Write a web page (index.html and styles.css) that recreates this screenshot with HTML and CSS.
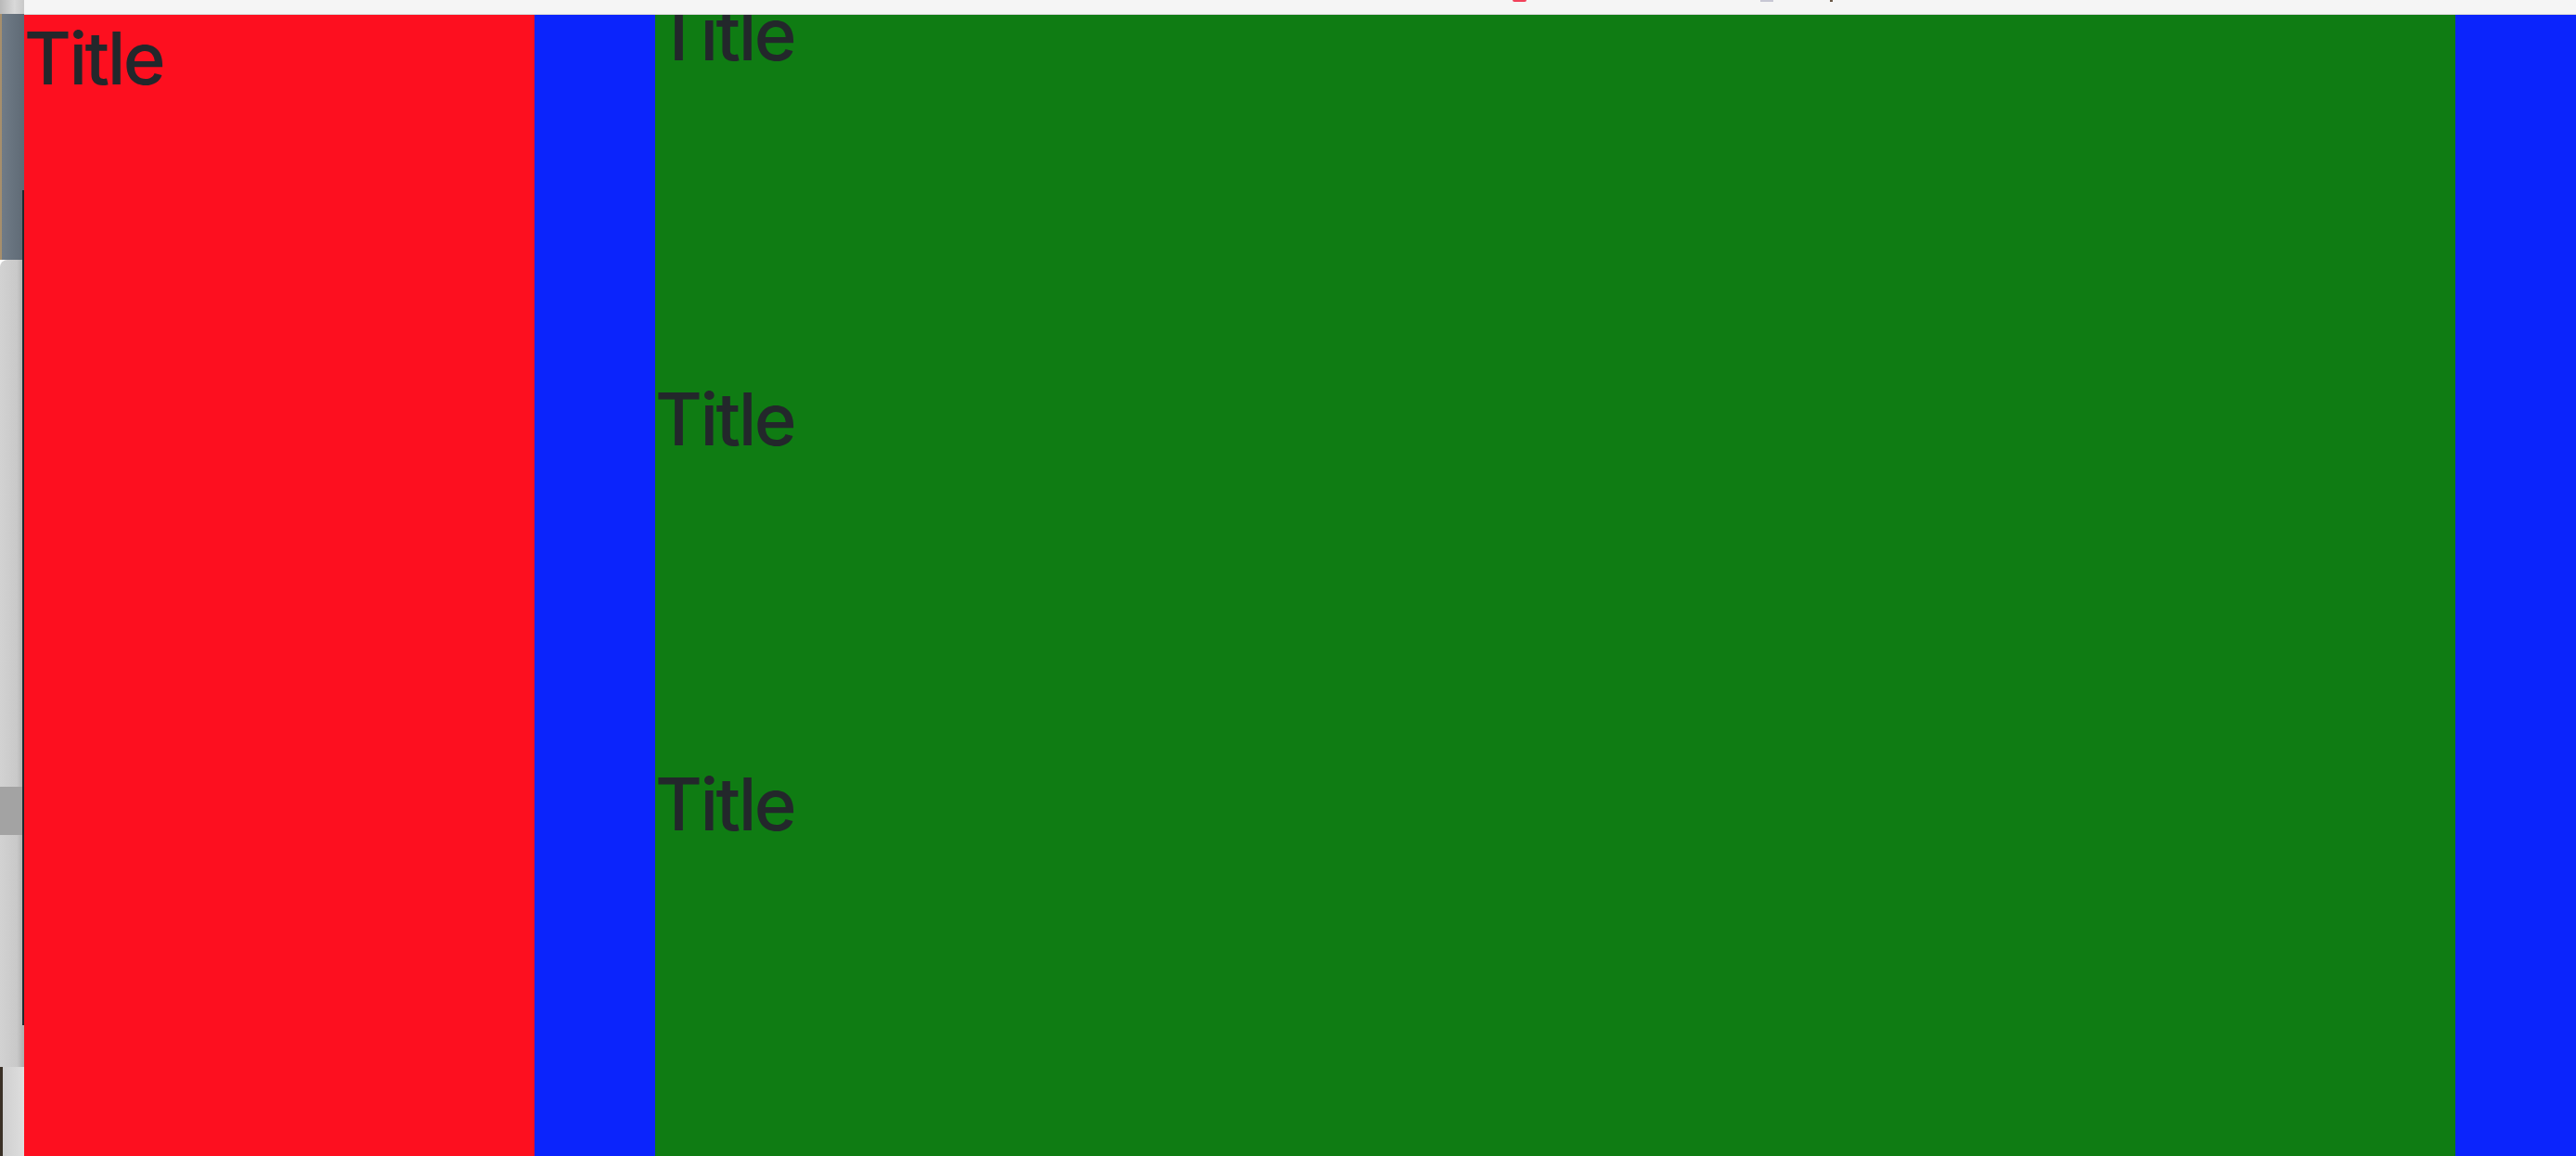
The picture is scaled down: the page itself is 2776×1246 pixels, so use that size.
FILE: index.html
```html
<!DOCTYPE html>
<html>
<head>
<meta charset="utf-8">
<link rel="stylesheet" href="styles.css">
</head>
<body>
<div class="page">
  <div class="desk">
    <div class="desk-top"></div>
    <div class="desk-slate"></div>
    <div class="desk-panel">
      <div class="panel-line"></div>
      <div class="panel-band"></div>
      <div class="panel-rest"></div>
    </div>
    <div class="desk-bottom"></div>
  </div>
  <div class="window">
    <div class="topbar">
      <span class="dot-red"></span>
      <span class="dot-gray"></span>
      <span class="dot-dark"></span>
    </div>
    <div class="content">
      <div class="col col-red">
        <h1 class="title">Title</h1>
      </div>
      <div class="col col-blue"></div>
      <div class="col col-green">
        <div class="stack">
          <section class="sec"><h1 class="title">Title</h1></section>
          <section class="sec"><h1 class="title">Title</h1></section>
          <section class="sec"><h1 class="title">Title</h1></section>
        </div>
      </div>
      <div class="col col-blue"></div>
    </div>
  </div>
</div>
</body>
</html>
```

FILE: styles.css
```css
html, body {
  margin: 0;
  padding: 0;
  width: 2776px;
  height: 1246px;
  overflow: hidden;
}
.page {
  display: flex;
  width: 2776px;
  height: 1246px;
}
.desk {
  width: 26px;
  flex: none;
  display: flex;
  flex-direction: column;
}
.desk-top {
  height: 15px;
  background: linear-gradient(90deg, #b9b9b9, #d9d9d9 60%, #c8c8c8);
}
.desk-slate {
  height: 265px;
  background: linear-gradient(90deg, #a68f6c 0, #a68f6c 2px, #6f7b87 2px, #5f6a75 100%);
}
.desk-panel {
  flex: 1;
  display: flex;
  flex-direction: column;
  background: linear-gradient(90deg, #d2d2d2, #c9c9c9 70%, #adadad);
  position: relative;
  border-top-left-radius: 8px;
}
.panel-line {
  position: absolute;
  right: 0;
  top: -75px;
  width: 2px;
  height: 900px;
  background: #1d2a2e;
}
.panel-band {
  margin-top: 568px;
  height: 52px;
  background: #a3a3a3;
}
.panel-rest {
  flex: 1;
}
.desk-bottom {
  height: 96px;
  background: linear-gradient(90deg, #3a3026 0, #3a3026 3px, #cfcfcf 3px, #dedede 100%);
}
.window {
  flex: 1;
  display: flex;
  flex-direction: column;
  min-width: 0;
}
.topbar {
  height: 15px;
  flex: none;
  background: #f5f5f5;
  border-bottom: 1px solid #d6d6d6;
  position: relative;
}
.dot-red {
  position: absolute;
  left: 1604px;
  top: 0;
  width: 15px;
  height: 2px;
  border-radius: 0 0 8px 8px;
  background: #f2415a;
}
.dot-gray {
  position: absolute;
  left: 1871px;
  top: 0;
  width: 14px;
  height: 2px;
  background: #c8c8d4;
}
.dot-dark {
  position: absolute;
  left: 1946px;
  top: 0;
  width: 3px;
  height: 2px;
  background: #6b5a48;
}
.content {
  flex: 1;
  display: flex;
  min-height: 0;
}
.col {
  flex: none;
  overflow: hidden;
}
.col-red {
  width: 550px;
  background: #fd0f1f;
}
.col-blue {
  width: 130px;
  background: #0b24fc;
}
.col-green {
  width: 1940px;
  background: #0f7c13;
}
.stack {
  margin-top: -26px;
}
.sec {
  height: 415px;
}
.title {
  margin: 0;
  font-family: Inter, "Liberation Sans", sans-serif;
  font-weight: 500;
  font-size: 78px;
  line-height: 1.2;
  color: #23272b;
  letter-spacing: -2.5px;
}
```
